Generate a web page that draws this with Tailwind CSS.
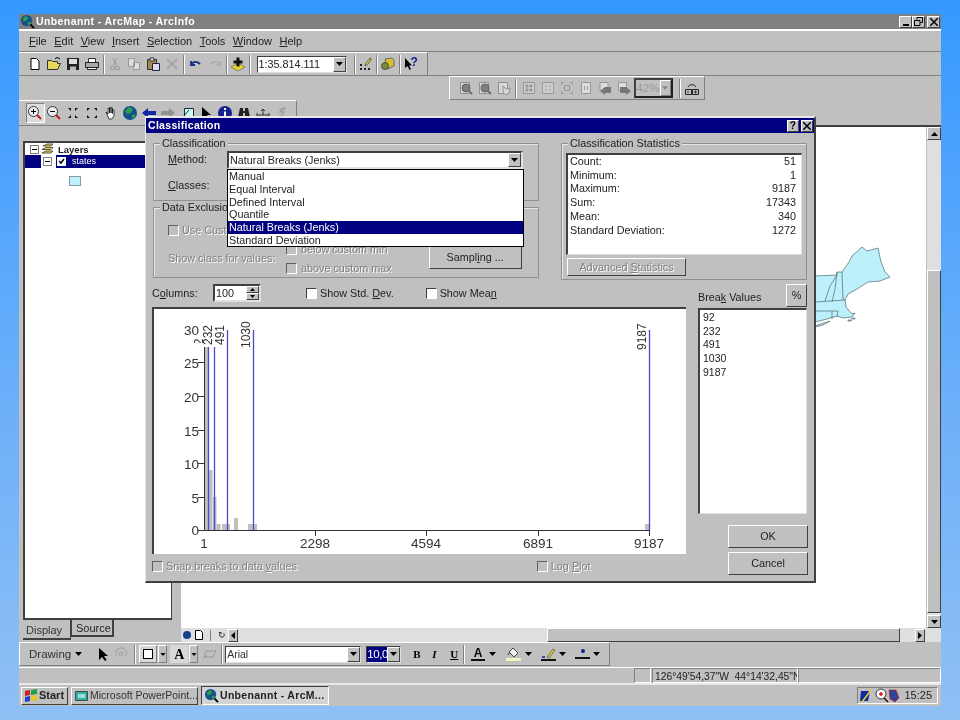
<!DOCTYPE html>
<html lang="de">
<head>
  <meta charset="UTF-8" />
  <title>Unbenannt - ArcMap - ArcInfo</title>
  <script src="https://cdn.jsdelivr.net/npm/@tailwindcss/browser@4"></script>
</head>
<body class="w-[960px] h-[720px] overflow-hidden bg-linear-to-b from-[#3399ff] to-[#90c0f4] font-['Liberation_Sans',Arial,sans-serif] text-[10.8px] leading-[13px] text-[#222]">

<!-- ArcMap window -->
<div class="relative ml-[19px] pt-[14px] w-[922px] blur-[0.35px]">
<div class="relative h-[692px] bg-[#c0c0c0] flex flex-col">

  <!-- title bar -->
  <div class="h-[15px] bg-[#808080] flex items-center text-white font-bold text-[10.5px] tracking-[0.4px]">
    <svg class="w-[15px] h-[15px] ml-[1px]" viewBox="0 0 16 16"><circle cx="7" cy="7" r="6" fill="#14508c"/><path d="M3 5l3-3 3 2-2 3-3 1zM8 9l3-1 1 3-3 1z" fill="#2f9e4f"/><path d="M11 11l4 4" stroke="#000" stroke-width="2"/></svg>
    <span class="ml-[1px]">Unbenannt - ArcMap - ArcInfo</span>
    <div class="ml-auto mr-[1px] flex">
      <span class="w-[13px] h-[12px] flex items-end justify-center bg-[#c0c0c0] border border-t-white border-l-white border-r-[#404040] border-b-[#404040]"><i class="w-[6px] h-[2px] mb-[1px] bg-black"></i></span>
      <span class="w-[13px] h-[12px] flex items-center justify-center bg-[#c0c0c0] border border-t-white border-l-white border-r-[#404040] border-b-[#404040]"><svg class="w-[9px] h-[9px]" viewBox="0 0 9 9" fill="none" stroke="#000"><path d="M3 2.500V.5h5.500v5H6.500M.5 3.500h5.500v5H.5z"/></svg></span>
      <span class="ml-[2px] w-[13px] h-[12px] flex items-center justify-center bg-[#c0c0c0] border border-t-white border-l-white border-r-[#404040] border-b-[#404040]"><svg class="w-[8px] h-[8px]" viewBox="0 0 8 8" stroke="#000" stroke-width="1.500"><path d="M0 0l8 8M8 0L0 8"/></svg></span>
    </div>
  </div>

  <!-- menu bar -->
  <div class="h-[23px] border-t-2 border-t-white border-b border-b-[#808080] flex items-center pl-[10px] gap-[7.500px] text-[11px]">
    <span><u>F</u>ile</span><span><u>E</u>dit</span><span><u>V</u>iew</span><span><u>I</u>nsert</span><span><u>S</u>election</span><span><u>T</u>ools</span><span><u>W</u>indow</span><span><u>H</u>elp</span>
  </div>

  <!-- standard toolbar -->
  <div class="h-[24px] flex">
    <div class="w-[409px] h-[24px] border-t border-t-white border-r border-r-[#808080] border-b border-b-[#808080] flex items-center pl-[6.500px]">
      <span class="w-[19px] flex justify-center"><svg class="w-4 h-4" viewBox="0 0 16 16"><path d="M4 2.500h5.500l2.500 2.500v8.500H4z" fill="#fff" stroke="#000"/></svg></span>
      <span class="w-[19px] flex justify-center"><svg class="w-4 h-4" viewBox="0 0 16 16"><path d="M1.500 13.500v-9h4l1 1h5v2h3l-3 6z" fill="#e8d860" stroke="#333"/><path d="M9 3l2-1.500 3 1.500" fill="none" stroke="#000"/></svg></span>
      <span class="w-[19px] flex justify-center"><svg class="w-4 h-4" viewBox="0 0 16 16"><path d="M2 2h12v12H2z" fill="#222"/><path d="M4 3h8v5H4z" fill="#ddd"/><path d="M5 10.500h6V14H5z" fill="#bbb"/></svg></span>
      <span class="w-[19px] flex justify-center"><svg class="w-4 h-4" viewBox="0 0 16 16"><path d="M4.500 6V2.500h7V6" fill="#fff" stroke="#333"/><path d="M1.500 6.500h13v5h-13z" fill="#aaa" stroke="#222"/><path d="M3.500 11.500h9v2h-9z" fill="#fff" stroke="#222"/></svg></span>
      <i class="w-[2px] h-[19px] mx-[1px] border-l border-l-[#808080] border-r border-r-white"></i>
      <span class="w-[19px] flex justify-center"><svg class="w-4 h-4" viewBox="0 0 16 16" fill="none" stroke="#999"><path d="M6 2l3 7M10 2L7 9"/><circle cx="5.500" cy="12" r="2"/><circle cx="10.500" cy="12" r="2"/></svg></span>
      <span class="w-[19px] flex justify-center"><svg class="w-4 h-4" viewBox="0 0 16 16" fill="#ddd" stroke="#999"><path d="M2.500 2.500h6v8h-6zM7.500 6.500h6v7h-6z"/></svg></span>
      <span class="w-[19px] flex justify-center"><svg class="w-4 h-4" viewBox="0 0 16 16"><path d="M2.500 3.500h9v10h-9z" fill="#a08c50" stroke="#333"/><path d="M5 2h4v3H5z" fill="#ddd" stroke="#333"/><path d="M7.500 7.500h7v7h-7z" fill="#dde" stroke="#224"/></svg></span>
      <span class="w-[19px] flex justify-center"><svg class="w-4 h-4" viewBox="0 0 16 16" stroke="#999" stroke-width="1.200"><path d="M3 3l10 10M13 3L3 13"/></svg></span>
      <i class="w-[2px] h-[19px] mx-[1.500px] border-l border-l-[#808080] border-r border-r-white"></i>
      <span class="w-[19px] flex justify-center"><svg class="w-4 h-4" viewBox="0 0 16 16" fill="none" stroke="#14308c" stroke-width="1.800"><path d="M3 9c2-4 6-4 9-1M3 5v4h4"/></svg></span>
      <span class="w-[19px] flex justify-center"><svg class="w-4 h-4" viewBox="0 0 16 16" fill="none" stroke="#aaa" stroke-width="1.500"><path d="M13 9c-2-4-6-4-9-1M13 5v4H9"/></svg></span>
      <i class="w-[2px] h-[19px] mx-[1px] border-l border-l-[#808080] border-r border-r-white"></i>
      <span class="w-[19px] flex justify-center"><svg class="w-4 h-4" viewBox="0 0 16 16"><path d="M8 7l7 4-7 4-7-4z" fill="#e8d030" stroke="#555" stroke-width=".6"/><path d="M6.500 1.500h3v3h3v3h-3v3h-3v-3h-3v-3h3z" fill="#111"/></svg></span>
      <i class="w-[2px] h-[19px] mx-[1px] border-l border-l-[#808080] border-r border-r-white"></i>
      <div class="ml-[5px] w-[90px] h-[17px] flex bg-white border border-t-[#404040] border-l-[#404040] border-r-[#e0e0e0] border-b-[#e0e0e0] text-[10.8px] leading-[15px]">
        <span class="flex-1 pl-[1px]">1:35.814.111</span>
        <span class="w-[13px] flex items-center justify-center bg-[#c0c0c0] border border-t-white border-l-white border-r-[#404040] border-b-[#404040]"><svg class="w-[7px] h-[4px]" viewBox="0 0 7 4"><path d="M0 0h7L3.500 4z"/></svg></span>
      </div>
      <i class="w-[2px] h-[19px] ml-[7px] mr-[1px] border-l border-l-[#808080] border-r border-r-white"></i>
      <span class="w-[19px] flex justify-center"><svg class="w-4 h-4" viewBox="0 0 16 16"><path d="M7 10l1-3 4-5 1.500 1-4 5.500z" fill="#e8d030" stroke="#333" stroke-width=".7"/><path d="M2 8h2v2H2zM2 12h2v2H2zM6 12h2v2H6zM10 12h2v2h-2z" fill="#222"/></svg></span>
      <i class="w-[2px] h-[19px] mx-[.500px] border-l border-l-[#808080] border-r border-r-white"></i>
      <span class="w-[19px] flex justify-center"><svg class="w-4 h-4" viewBox="0 0 16 16"><path d="M5 3l7-1 2 2v6l-7 3z" fill="#d8c030" stroke="#444" stroke-width=".7"/><circle cx="5" cy="10" r="3.500" fill="#7a8a40" stroke="#333" stroke-width=".7"/></svg></span>
      <i class="w-[2px] h-[19px] mx-[1px] border-l border-l-[#808080] border-r border-r-white"></i>
      <span class="w-[19px] flex justify-center relative"><svg class="w-4 h-4" viewBox="0 0 16 16"><path d="M2 2v10l2.500-2 2 4 1.500-.8-2-3.700h3z" fill="#000"/></svg><b class="absolute left-[9px] top-[0px] text-[12px] text-[#14208c]">?</b></span>
    </div>
    <div class="flex-1 border-b border-b-[#808080] border-t border-t-[#c0c0c0]"></div>
  </div>

  <!-- second row: layout toolbar -->
  <div class="h-[24px] pl-[430px]">
    <div class="w-[256px] h-[24px] border border-t-white border-l-white border-r-[#808080] border-b-[#808080] flex items-center pl-[6px]">
      <span class="w-[19px] flex justify-center"><svg class="w-4 h-4" viewBox="0 0 16 16"><path d="M2.500 2.500h9v11h-9z" fill="#d4d4d4" stroke="#909090"/><circle cx="8" cy="8" r="4" fill="#808080" stroke="#606060"/><path d="M11 11l3 3" stroke="#707070" stroke-width="2"/></svg></span>
      <span class="w-[19px] flex justify-center"><svg class="w-4 h-4" viewBox="0 0 16 16"><path d="M2.500 2.500h9v11h-9z" fill="#d4d4d4" stroke="#909090"/><circle cx="8" cy="8" r="4" fill="#808080" stroke="#606060"/><path d="M11 11l3 3" stroke="#707070" stroke-width="2"/></svg></span>
      <span class="w-[19px] flex justify-center"><svg class="w-4 h-4" viewBox="0 0 16 16" fill="#d8d8d8" stroke="#909090"><path d="M2.500 2.500h9v11h-9z"/><path d="M7 6l3 3 4-1-1 5-3 2-3-3z"/></svg></span>
      <i class="w-[2px] h-[19px] mx-[2px] border-l border-l-[#808080] border-r border-r-white"></i>
      <span class="w-[19px] flex justify-center"><svg class="w-4 h-4" viewBox="0 0 16 16" fill="#ccc" stroke="#999"><path d="M2.500 2.500h11v11h-11z"/><path d="M5 5h2v2H5zM9 9h2v2H9zM9 5h2v2H9zM5 9h2v2H5z" fill="#999"/></svg></span>
      <span class="w-[19px] flex justify-center"><svg class="w-4 h-4" viewBox="0 0 16 16" fill="#ccc" stroke="#999"><path d="M2.500 2.500h11v11h-11z"/><path d="M5 5l2 2M11 11L9 9M11 5L9 7M5 11l2-2"/></svg></span>
      <span class="w-[19px] flex justify-center"><svg class="w-4 h-4" viewBox="0 0 16 16" fill="none" stroke="#999"><path d="M2.500 5V2.500H5M11 2.500h2.500V5M13.500 11v2.500H11M5 13.500H2.500V11M5.500 5.500h5v5h-5z"/></svg></span>
      <span class="w-[19px] flex justify-center"><svg class="w-4 h-4" viewBox="0 0 16 16" fill="#ddd" stroke="#999"><path d="M3.500 2.500h9v11h-9z"/><path d="M6.500 6v4M9.500 6v4"/></svg></span>
      <span class="w-[19px] flex justify-center"><svg class="w-4 h-4" viewBox="0 0 16 16"><path d="M3 2.500h8v8H3z" fill="#ddd" stroke="#999"/><path d="M14 7v6H8V15l-5-4 5-4z" fill="#777"/></svg></span>
      <span class="w-[19px] flex justify-center"><svg class="w-4 h-4" viewBox="0 0 16 16"><path d="M2.500 2.500h8v8h-8z" fill="#ddd" stroke="#999"/><path d="M4 7v6h6v2l5-4-5-4z" fill="#777"/></svg></span>
      <div class="ml-[.500px] w-[39px] h-[20px] flex border-2 border-t-[#404040] border-l-[#404040] border-r-[#222] border-b-[#222] text-[11.500px] leading-[16px] text-[#999]">
        <span class="flex-1 pl-[1px]">42%</span>
        <span class="w-[12px] flex items-center justify-center bg-[#c0c0c0] border border-t-white border-l-white border-r-[#808080] border-b-[#808080]"><svg class="w-[6px] h-[4px]" viewBox="0 0 7 4"><path d="M0 0h7L3.500 4z" fill="#888"/></svg></span>
      </div>
      <i class="w-[2px] h-[19px] ml-[6px] mr-[2px] border-l border-l-[#808080] border-r border-r-white"></i>
      <span class="w-[19px] flex justify-center"><svg class="w-4 h-4" viewBox="0 0 16 16" fill="none" stroke="#222"><path d="M1.500 9.500h6v5h-6zM8.500 9.500h6v5h-6zM4 7c1-3 7-3 8 0"/><path d="M4 11v2M11 11h1v2h-1z"/></svg></span>
    </div>
  </div>

  <!-- tools toolbar -->
  <div class="h-[25px] flex">
    <div class="w-[278px] border-t border-t-white border-r border-r-[#808080] flex items-center pl-[6.500px]">
      <span class="w-[19px] h-[20px] flex justify-center items-center bg-[#dcdcdc] border border-t-[#808080] border-l-[#808080] border-r-white border-b-white"><svg class="w-4 h-4" viewBox="0 0 16 16"><circle cx="6.500" cy="6.500" r="5" fill="#eee" stroke="#333"/><path d="M4 6.500h5M6.500 4v5" stroke="#000"/><path d="M10 10l4 4" stroke="#c01818" stroke-width="2"/></svg></span>
      <span class="w-[19px] flex justify-center"><svg class="w-4 h-4" viewBox="0 0 16 16"><circle cx="6.500" cy="6.500" r="5" fill="#eee" stroke="#333"/><path d="M4 6.500h5" stroke="#000"/><path d="M10 10l4 4" stroke="#c01818" stroke-width="2"/></svg></span>
      <span class="w-[19px] flex justify-center"><svg class="w-4 h-4" viewBox="0 0 16 16" fill="#111"><path d="M3 3l3 3V3zM13 3l-3 3V3zM3 13l3-3v3zM13 13l-3-3v3z"/></svg></span>
      <span class="w-[19px] flex justify-center"><svg class="w-4 h-4" viewBox="0 0 16 16" fill="#111"><path d="M3 3h3L3 6zM13 3h-3l3 3zM3 13h3l-3-3zM13 13h-3l3-3z"/></svg></span>
      <span class="w-[19px] flex justify-center"><svg class="w-4 h-4" viewBox="0 0 16 16"><path d="M3 7l2 2V3.500h1.500V8V2.500H8V8V3h1.500v5.500V5H11v6l-2 3H6z" fill="#fff" stroke="#111" stroke-width=".8"/></svg></span>
      <span class="w-[19px] flex justify-center"><svg class="w-4 h-4" viewBox="0 0 16 16"><circle cx="8" cy="8" r="7" fill="#14508c"/><path d="M3 6l4-4 4 2-2 4-4 1zM10 10l3-1 0 3-3 2z" fill="#2f9e4f"/></svg></span>
      <span class="w-[19px] flex justify-center"><svg class="w-4 h-4" viewBox="0 0 16 16"><path d="M1 8l6-5v3h8v4H7v3z" fill="#1428a0"/></svg></span>
      <span class="w-[19px] flex justify-center"><svg class="w-4 h-4" viewBox="0 0 16 16"><path d="M15 8L9 3v3H1v4h8v3z" fill="#909090"/></svg></span>
      <span class="w-[19px] flex justify-center"><svg class="w-4 h-4" viewBox="0 0 16 16"><path d="M5.500 3.500h9v8h-9z" fill="#cfe" stroke="#224"/><path d="M1 12h3l6-7" stroke="#124" fill="none"/></svg></span>
      <span class="w-[19px] flex justify-center"><svg class="w-4 h-4" viewBox="0 0 16 16"><path d="M4 2v12l3-3 3 4 1.500-1-2.500-4h4z" fill="#000"/></svg></span>
      <span class="w-[19px] flex justify-center"><svg class="w-4 h-4" viewBox="0 0 16 16"><circle cx="8" cy="8" r="7" fill="#14208c"/><path d="M7 6.500h2V13H7zM7 3h2v2H7z" fill="#fff"/></svg></span>
      <span class="w-[19px] flex justify-center"><svg class="w-4 h-4" viewBox="0 0 16 16" fill="#222"><path d="M4 3h3v3h2V3h3l2 9h-5V8H7v4H2z"/></svg></span>
      <span class="w-[19px] flex justify-center"><svg class="w-4 h-4" viewBox="0 0 16 16" fill="none" stroke="#333"><path d="M2 10h12M8 10V4M6 6l2-2 2 2"/><path d="M2 8v4M14 8v4"/></svg></span>
      <span class="w-[19px] flex justify-center"><svg class="w-4 h-4" viewBox="0 0 16 16" fill="none" stroke="#999" stroke-width="1.200"><path d="M11 2L6 7h4l-5 7M5 4h6M4 11h6"/></svg></span>
    </div>
  </div>

  <!-- TOC + map -->
  <div class="h-[517px] flex">
    <div class="w-[159px] flex flex-col pl-[4px] pt-[15px] border-t border-t-[#808080]">
      <div class="w-[149px] h-[479px] bg-white border-t-2 border-l-2 border-r border-b-2 border-[#404040]">
        <div class="h-[12px] flex items-center pl-[5px]">
          <span class="w-[9px] h-[9px] border border-[#808080] flex items-center justify-center"><i class="w-[5px] h-[1px] bg-black"></i></span>
          <svg class="w-[14px] h-[13px] ml-[2px]" viewBox="0 0 14 13"><path d="M2 3l4-2h6l-2 2H3zM1 6.500l4-2h7l-2 2H2zM1 10l4-2h7l-2 2H2z" fill="#e8d830" stroke="#333" stroke-width=".8"/></svg>
          <b class="ml-[3px] text-[9.500px]">Layers</b>
        </div>
        <div class="h-[13px] flex items-center">
          <i class="w-[16px] h-[13px] bg-[#000080]"></i>
          <span class="ml-[2px] w-[9px] h-[9px] border border-[#808080] flex items-center justify-center"><i class="w-[5px] h-[1px] bg-black"></i></span>
          <div class="ml-[4px] flex-1 h-[13px] bg-[#000080] flex items-center text-white text-[9px]">
            <span class="w-[9px] h-[9px] ml-[1px] bg-white flex items-center justify-center"><svg class="w-[7px] h-[7px]" viewBox="0 0 7 7" fill="none" stroke="#000" stroke-width="1.500"><path d="M1 3l2 2 3-4"/></svg></span>
            <span class="ml-[6px]">states</span>
          </div>
        </div>
        <div class="ml-[44px] mt-[8px] w-[12px] h-[10px] bg-[#bdf0fb] border border-[#8a9a9a]"></div>
      </div>
      <div class="flex h-[20px] text-[11px]">
        <span class="w-[48px] h-[20px] pl-[3px] pt-[4px] border-b-2 border-b-[#404040] border-r border-r-[#404040] text-[#333]">Display</span>
        <span class="w-[43px] h-[17px] pl-[4px] pt-[2px] border-l border-l-[#404040] border-r-2 border-r-[#404040] border-b-2 border-b-[#404040]">Source</span>
      </div>
    </div>
    <div class="flex-1 flex flex-col">
      <div class="h-[503px] flex border-t-2 border-t-[#404040] ml-[3px]">
        <div class="relative flex-1 bg-white">
          <!-- northeast states showing past the dialog -->
          <svg class="absolute left-[634px] top-[119px] w-[80px] h-[100px]" viewBox="815 247 80 100" fill="#bdf0fb" stroke="#4a6a70" stroke-width=".7">
            <path d="M815 277l22-1 0-3 5 0 7-10 3-6 10-9 5 4 11-3 3 14 4 10 5 5-10 4-12 1-11 7-9 5-3 6 1 7 6 7 3-1-3 4-9 1-6-2-10 3-12 3z"/>
            <path d="M842 273l1 27 2 1M837 273l-2 17-3 13M837 276l-7 11-5 15M815 303l30-2M815 312h23M832 312v8M838 312l-1 6" fill="none"/>
            <path d="M815 327l15-5-7 4-8 2z"/>
            <path d="M848 321h4l-1 1h-3zM852 319h3v1h-3z"/>
          </svg>
        </div>
        <div class="w-[15px] flex flex-col bg-[#dfdfdf] border-l border-l-[#c0c0c0]">
          <span class="h-[13px] flex items-center justify-center bg-[#c0c0c0] border border-t-white border-l-white border-r-[#404040] border-b-[#404040]"><svg class="w-[7px] h-[4px]" viewBox="0 0 7 4"><path d="M0 4h7L3.500 0z"/></svg></span>
          <div class="h-[130px]"></div>
          <div class="flex-1 bg-[#c0c0c0] border border-t-white border-l-white border-r-[#404040] border-b-[#404040]"></div>
          <span class="h-[13px] mt-[2px] flex items-center justify-center bg-[#c0c0c0] border border-t-white border-l-white border-r-[#404040] border-b-[#404040]"><svg class="w-[7px] h-[4px]" viewBox="0 0 7 4"><path d="M0 0h7L3.500 4z"/></svg></span>
        </div>
      </div>
      <div class="h-[14px] flex items-center bg-[#dfdfdf] ml-[3px]">
        <span class="w-[12px] flex justify-center"><i class="w-[8px] h-[8px] rounded-full bg-[#14408c]"></i></span>
        <span class="w-[12px] flex justify-center"><svg class="w-[8px] h-[10px]" viewBox="0 0 8 10"><path d="M.5.500h5l2 2v7h-7z" fill="#fff" stroke="#000"/></svg></span>
        <i class="w-[1px] h-[11px] mx-[5px] bg-[#808080]"></i>
        <span class="w-[12px] text-center text-[9px] leading-[10px]">↻</span>
        <span class="w-[10px] h-[13px] flex items-center justify-center bg-[#c0c0c0] border border-t-white border-l-white border-r-[#404040] border-b-[#404040]"><svg class="w-[4px] h-[7px]" viewBox="0 0 4 7"><path d="M4 0v7L0 3.500z"/></svg></span>
        <div class="ml-[309px] w-[353px] h-[14px] bg-[#c0c0c0] border border-t-white border-l-white border-r-[#404040] border-b-[#404040]"></div>
        <div class="w-[15px]"></div>
        <span class="w-[10px] h-[13px] flex items-center justify-center bg-[#c0c0c0] border border-t-white border-l-white border-r-[#404040] border-b-[#404040]"><svg class="w-[4px] h-[7px]" viewBox="0 0 4 7"><path d="M0 0v7l4-3.500z"/></svg></span>
      </div>
    </div>
  </div>

  <!-- drawing toolbar -->
  <div class="h-[24px] flex items-center">
    <div class="w-[591px] h-[24px] border border-t-white border-l-white border-r-[#808080] border-b-[#808080] flex items-center pl-[9px] text-[11.500px] text-[#333]">
      <span>Drawing</span>
      <svg class="ml-[4px] w-[7px] h-[4px]" viewBox="0 0 7 4"><path d="M0 0h7L3.500 4z"/></svg>
      <svg class="ml-[13px] w-4 h-4" viewBox="0 0 16 16"><path d="M4 2v12l3-3 3 4 1.500-1-2.500-4h4z" fill="#000"/></svg>
      <svg class="ml-[3px] w-[14px] h-[14px]" viewBox="0 0 16 16" fill="none" stroke="#aaa" stroke-width="1.500"><path d="M3 10a6 6 0 1 1 10 1"/><circle cx="8" cy="8" r="2"/></svg>
      <i class="w-[2px] h-[19px] ml-[6px] border-l border-l-[#808080] border-r border-r-white"></i>
      <span class="ml-[3px] w-[18px] h-[18px] flex items-center justify-center bg-[#d8d8d8] border border-t-white border-l-white border-r-[#808080] border-b-[#808080]"><i class="w-[10px] h-[10px] bg-white border border-black"></i></span>
      <span class="ml-[1px] w-[9px] h-[18px] flex items-center justify-center border border-t-white border-l-white border-r-[#808080] border-b-[#808080]"><svg class="w-[6px] h-[3px]" viewBox="0 0 7 4"><path d="M0 0h7L3.500 4z"/></svg></span>
      <span class="ml-[3px] w-[18px] h-[18px] flex items-center justify-center bg-[#d8d8d8] font-['Liberation_Serif',serif] font-bold text-[14px] text-black">A</span>
      <span class="ml-[1px] w-[9px] h-[18px] flex items-center justify-center border border-t-white border-l-white border-r-[#808080] border-b-[#808080]"><svg class="w-[6px] h-[3px]" viewBox="0 0 7 4"><path d="M0 0h7L3.500 4z"/></svg></span>
      <svg class="ml-[4px] w-4 h-4" viewBox="0 0 16 16" fill="none" stroke="#999"><path d="M4 5h10l-3 6H2zM1 13l4-4"/></svg>
      <i class="w-[2px] h-[19px] ml-[3px] border-l border-l-[#808080] border-r border-r-white"></i>
      <div class="ml-[2px] w-[136px] h-[17px] flex bg-white border border-t-[#404040] border-l-[#404040] border-r-[#e0e0e0] border-b-[#e0e0e0] leading-[15px] text-[10.500px]">
        <span class="flex-1 pl-[1px]">Arial</span>
        <span class="w-[13px] flex items-center justify-center bg-[#c0c0c0] border border-t-white border-l-white border-r-[#404040] border-b-[#404040]"><svg class="w-[7px] h-[4px]" viewBox="0 0 7 4"><path d="M0 0h7L3.500 4z"/></svg></span>
      </div>
      <div class="ml-[5px] w-[35px] h-[17px] flex bg-white border border-t-[#404040] border-l-[#404040] border-r-[#e0e0e0] border-b-[#e0e0e0] leading-[15px] text-[11.500px]">
        <span class="w-[20px] bg-[#000080] text-white tracking-[-0.4px]">10,0</span>
        <span class="ml-auto w-[13px] flex items-center justify-center bg-[#c0c0c0] border border-t-white border-l-white border-r-[#404040] border-b-[#404040]"><svg class="w-[7px] h-[4px]" viewBox="0 0 7 4"><path d="M0 0h7L3.500 4z"/></svg></span>
      </div>
      <b class="ml-[12px] w-[10px] font-['Liberation_Serif',serif] text-[11px] text-black">B</b>
      <b class="ml-[9px] w-[10px] font-['Liberation_Serif',serif] italic text-[11px] text-black">I</b>
      <b class="ml-[8px] w-[10px] font-['Liberation_Serif',serif] underline text-[11px] text-black">U</b>
      <i class="w-[2px] h-[19px] ml-[3px] border-l border-l-[#808080] border-r border-r-white"></i>
      <span class="ml-[6px] w-[14px] flex flex-col items-center font-['Liberation_Sans',sans-serif] font-bold not-italic text-[12px] leading-[12px] text-black">A<i class="w-[14px] h-[2px] bg-[#111]"></i></span>
      <svg class="ml-[4px] w-[7px] h-[4px]" viewBox="0 0 7 4"><path d="M0 0h7L3.500 4z"/></svg>
      <span class="ml-[10px] w-[15px] flex flex-col items-center"><svg class="w-[13px] h-[11px]" viewBox="0 0 13 11"><path d="M6 1l5 5-4 4-5-5z" fill="#eee" stroke="#445"/><path d="M3 5l-2 3" stroke="#336"/></svg><i class="w-[15px] h-[3px] bg-[#f4f4c0]"></i></span>
      <svg class="ml-[4px] w-[7px] h-[4px]" viewBox="0 0 7 4"><path d="M0 0h7L3.500 4z"/></svg>
      <span class="ml-[9px] w-[15px] flex flex-col items-center"><svg class="w-[13px] h-[11px]" viewBox="0 0 13 11"><path d="M5 9l6-8 2 1-6 8z" fill="#e8d030" stroke="#333" stroke-width=".6"/><path d="M0 9h3" stroke="#14208c" stroke-width="1.500"/></svg><i class="w-[15px] h-[2px] bg-[#111]"></i></span>
      <svg class="ml-[3px] w-[7px] h-[4px]" viewBox="0 0 7 4"><path d="M0 0h7L3.500 4z"/></svg>
      <span class="ml-[9px] w-[15px] flex flex-col items-center"><i class="w-[4px] h-[4px] mb-[4px] rounded-full bg-[#14208c]"></i><i class="w-[15px] h-[2px] bg-[#111]"></i></span>
      <svg class="ml-[3px] w-[7px] h-[4px]" viewBox="0 0 7 4"><path d="M0 0h7L3.500 4z"/></svg>
    </div>
  </div>

  <!-- status bar -->
  <div class="h-[17px] mt-[1px] flex border-t border-t-white border-b border-b-[#e8e8e8]">
    <div class="w-[615px]"></div>
    <div class="w-[17px] border border-t-[#808080] border-l-[#808080] border-r-white border-b-white"></div>
    <div class="ml-[1px] w-[146px] pl-[2px] border border-t-[#808080] border-l-[#808080] border-r-white border-b-white text-[10.300px] leading-[15px] whitespace-nowrap overflow-hidden">126°49'54,37"W&nbsp; 44°14'32,45"N</div>
    <div class="flex-1 border border-t-[#808080] border-l-[#808080] border-r-white border-b-white"></div>
  </div>

  <!-- taskbar -->
  <div class="flex-1 flex items-center pl-[2px] pr-[3px] text-[10.500px] border-t border-t-[#e8e8e8]">
    <span class="w-[47px] h-[18px] flex items-center font-bold text-[11px] pl-[2px] gap-[1px] border border-t-white border-l-white border-r-[#404040] border-b-[#404040]">
      <svg class="w-[14px] h-[13px] shrink-0" viewBox="0 0 14 13"><path d="M1 2l5-1v5l-5 1z" fill="#d02020"/><path d="M7 1l6-1v5l-6 1z" fill="#20a040"/><path d="M1 8l5-1v5l-5 1z" fill="#2040d0"/><path d="M7 7l6-1v5l-6 1z" fill="#e8c820"/></svg>
      <span>Start</span>
    </span>
    <span class="ml-[3px] w-[127px] h-[18px] flex items-center pl-[3px] gap-[2px] border border-t-white border-l-white border-r-[#404040] border-b-[#404040] text-[#333] whitespace-nowrap">
      <svg class="w-[13px] h-[12px] shrink-0" viewBox="0 0 13 12"><path d="M.5 1.500h12v9H.5z" fill="#30b0a0" stroke="#445"/><path d="M3 4h7v4H3z" fill="#a0e0d0"/></svg>
      <span>Microsoft PowerPoint...</span>
    </span>
    <span class="ml-[3px] w-[128px] h-[19px] flex items-center pl-[2px] gap-[1px] bg-[#d4d4d4] border border-t-[#404040] border-l-[#404040] border-r-white border-b-white font-bold text-[10.500px] tracking-[0.3px] whitespace-nowrap">
      <svg class="w-[15px] h-[15px] shrink-0" viewBox="0 0 16 16"><circle cx="7" cy="7" r="6" fill="#14508c"/><path d="M3 5l3-3 3 2-2 3-3 1zM8 9l3-1 1 3-3 1z" fill="#2f9e4f"/><path d="M11 11l4 4" stroke="#000" stroke-width="2"/></svg>
      <span>Unbenannt - ArcM...</span>
    </span>
    <div class="ml-auto w-[81px] h-[17px] flex items-center pl-[1px] border border-t-[#808080] border-l-[#808080] border-r-white border-b-white text-[11px]">
      <svg class="w-[42px] h-[15px] shrink-0" viewBox="0 0 42 15"><path d="M2 3h9l-2 10H1z" fill="#1428a0"/><path d="M3 14l9-12" stroke="#e8d030" stroke-width="1.500"/><circle cx="22" cy="6" r="5" fill="#fff" stroke="#333"/><path d="M20 6h4M22 4v4" stroke="#d01818" stroke-width="1.500"/><path d="M25 10l4 4" stroke="#111" stroke-width="1.500"/><path d="M30 2h7l3 8-4 4-5-3z" fill="#30409c" stroke="#c03020" stroke-width=".8"/></svg>
      <span class="ml-auto mr-[5px]">15:25</span>
    </div>
  </div>

  <!-- Classification dialog -->
  <div class="absolute left-[126px] top-[102px] w-[671px] h-[467px] bg-[#c0c0c0] border-t-2 border-t-[#e8e8e8] border-l border-l-[#e8e8e8] border-r-2 border-r-[#404040] border-b-2 border-b-[#404040] flex flex-col">
    <div class="h-[15px] bg-[#000080] flex items-center pl-[2px] text-white font-bold text-[10.500px] tracking-[0.3px]">
      <span>Classification</span>
      <span class="ml-auto w-[12px] h-[12px] flex items-center justify-center bg-[#c0c0c0] text-black text-[10px] border border-t-white border-l-white border-r-[#404040] border-b-[#404040]">?</span>
      <span class="ml-[2px] mr-[1px] w-[12px] h-[12px] flex items-center justify-center bg-[#c0c0c0] border border-t-white border-l-white border-r-[#404040] border-b-[#404040]"><svg class="w-[8px] h-[8px]" viewBox="0 0 8 8" stroke="#000" stroke-width="1.500"><path d="M0 0l8 8M8 0L0 8"/></svg></span>
    </div>

    <div class="flex pl-[7px] pt-[10px] h-[147px]">
      <div class="w-[386px] flex flex-col gap-[6px]">
        <!-- Classification group -->
        <div class="relative h-[58px] border border-[#909090] shadow-[inset_1px_1px_0_#e8e8e8]">
          <span class="absolute left-[6px] -top-[7px] px-[2px] bg-[#c0c0c0]">Classification</span>
          <div class="flex items-center mt-[7px] h-[17px] pl-[14px]">
            <span class="w-[59px]"><u>M</u>ethod:</span>
            <div class="w-[296px] h-[18px] flex bg-white border-2 border-t-[#404040] border-l-[#404040] border-r-[#e0e0e0] border-b-[#e0e0e0] leading-[14px]">
              <span class="flex-1 pl-[1px]">Natural Breaks (Jenks)</span>
              <span class="w-[13px] flex items-center justify-center bg-[#c0c0c0] border border-t-white border-l-white border-r-[#404040] border-b-[#404040]"><svg class="w-[7px] h-[4px]" viewBox="0 0 7 4"><path d="M0 0h7L3.500 4z"/></svg></span>
            </div>
          </div>
          <div class="mt-[11px] pl-[14px]"><u>C</u>lasses:</div>
          <!-- open dropdown over the groups -->
          <div class="absolute left-[73px] top-[25px] z-10 w-[297px] h-[78px] bg-white border border-black leading-[13px]">
            <div class="pl-[1px] h-[12.800px]">Manual</div>
            <div class="pl-[1px] h-[12.800px]">Equal Interval</div>
            <div class="pl-[1px] h-[12.800px]">Defined Interval</div>
            <div class="pl-[1px] h-[12.800px]">Quantile</div>
            <div class="pl-[1px] h-[12.800px] bg-[#000080] text-white">Natural Breaks (Jenks)</div>
            <div class="pl-[1px] h-[12.800px]">Standard Deviation</div>
          </div>
        </div>
        <!-- Data Exclusion group -->
        <div class="relative h-[71px] border border-[#909090] shadow-[inset_1px_1px_0_#e8e8e8]">
          <span class="absolute left-[6px] -top-[7px] px-[2px] bg-[#c0c0c0]">Data Exclusio</span>
          <div class="mt-[16px] pl-[14px] flex items-center gap-[3px] text-[#808080] [text-shadow:1px_1px_0_#fff]">
            <i class="w-[11px] h-[11px] border border-t-[#606060] border-l-[#606060] border-r-white border-b-white"></i>
            <span>Use Cust</span>
          </div>
          <div class="mt-[3px] flex items-start pl-[14px] text-[#808080] [text-shadow:1px_1px_0_#fff]">
            <span class="w-[118px] mt-[12px]">Show class for values:</span>
            <div class="flex flex-col gap-[6px] pt-[3px]">
              <div class="flex items-center gap-[4px]"><i class="w-[11px] h-[11px] border border-t-[#606060] border-l-[#606060] border-r-white border-b-white"></i><span>below custom min</span></div>
              <div class="flex items-center gap-[4px]"><i class="w-[11px] h-[11px] border border-t-[#606060] border-l-[#606060] border-r-white border-b-white"></i><span>above custom max</span></div>
            </div>
            <span class="ml-[37px] mt-[6px] w-[93px] h-[23px] flex items-center justify-center text-[#222] [text-shadow:none] border border-t-white border-l-white border-r-[#404040] border-b-[#404040]">Sampl<u>i</u>ng ...</span>
          </div>
        </div>
      </div>
      <!-- Statistics group -->
      <div class="relative ml-[22px] w-[246px] h-[137px] border border-[#909090] shadow-[inset_1px_1px_0_#e8e8e8]">
        <span class="absolute left-[6px] -top-[7px] px-[2px] bg-[#c0c0c0]">Classification Statistics</span>
        <div class="ml-[4px] mt-[9px] w-[236px] h-[102px] bg-white border-t-2 border-l-2 border-[#404040] border-r border-b border-r-[#e0e0e0] border-b-[#e0e0e0] pl-[2px] pr-[3px] leading-[13.700px]">
          <div class="flex justify-between pr-[2px]"><span>Count:</span><span>51</span></div>
          <div class="flex justify-between pr-[2px]"><span>Minimum:</span><span>1</span></div>
          <div class="flex justify-between pr-[2px]"><span>Maximum:</span><span>9187</span></div>
          <div class="flex justify-between pr-[2px]"><span>Sum:</span><span>17343</span></div>
          <div class="flex justify-between pr-[2px]"><span>Mean:</span><span>340</span></div>
          <div class="flex justify-between pr-[2px]"><span>Standard Deviation:</span><span>1272</span></div>
        </div>
        <div class="ml-[5px] mt-[3px] w-[119px] h-[18px] flex items-center justify-center border border-t-white border-l-white border-r-[#404040] border-b-[#404040] text-[#808080] [text-shadow:1px_1px_0_#fff]">Advanced&nbsp;<u>S</u>tatistics</div>
      </div>
    </div>

    <div class="flex pl-[6px] pt-[2px]">
      <div class="w-[534px]">
        <div class="h-[22px] flex items-center">
          <span class="w-[61px]">C<u>o</u>lumns:</span>
          <div class="w-[48px] h-[18px] flex bg-white border-2 border-t-[#404040] border-l-[#404040] border-r-[#e0e0e0] border-b-[#e0e0e0] leading-[14px]">
            <span class="flex-1 pl-[1px]">100</span>
            <span class="w-[13px] flex flex-col bg-[#c0c0c0]">
              <i class="h-[7px] flex items-center justify-center border border-t-white border-l-white border-r-[#404040] border-b-[#404040]"><svg class="w-[5px] h-[3px]" viewBox="0 0 7 4"><path d="M0 4h7L3.500 0z"/></svg></i>
              <i class="h-[7px] flex items-center justify-center border border-t-white border-l-white border-r-[#404040] border-b-[#404040]"><svg class="w-[5px] h-[3px]" viewBox="0 0 7 4"><path d="M0 0h7L3.500 4z"/></svg></i>
            </span>
          </div>
          <i class="ml-[45px] w-[11px] h-[11px] bg-white border border-t-[#404040] border-l-[#404040] border-r-white border-b-white"></i>
          <span class="ml-[3px]">Show Std. <u>D</u>ev.</span>
          <i class="ml-[32px] w-[11px] h-[11px] bg-white border border-t-[#404040] border-l-[#404040] border-r-white border-b-white"></i>
          <span class="ml-[3px]">Show Mea<u>n</u></span>
        </div>
        <!-- histogram -->
        <svg class="block mt-[3px] w-[534px] h-[247px] bg-white border-t-2 border-l-2 border-t-[#404040] border-l-[#404040]" viewBox="154 309 532 245">
          <g font-family="Liberation Sans, Arial, sans-serif" fill="#333">
            <text transform="translate(203 352) rotate(-90)" font-size="12">92</text>
            <rect x="194" y="343" width="10" height="12" fill="#fff"/>
          </g>
          <g fill="#c0c0c0">
            <rect x="204" y="347" width="4" height="183"/><rect x="209" y="470" width="3.500" height="60"/><rect x="213" y="497" width="3.500" height="33"/>
            <rect x="216.500" y="524" width="4" height="6"/><rect x="222" y="524" width="4" height="6"/><rect x="226" y="524" width="4" height="6"/>
            <rect x="234" y="518" width="4" height="12"/><rect x="248" y="524" width="4" height="6"/><rect x="252" y="524" width="5" height="6"/><rect x="645" y="524" width="4" height="6"/>
          </g>
          <g stroke="#4a4ad0" stroke-width="1.300">
            <path d="M208.500 347V530M214.500 347V530M227.500 330V530M253.500 330V530M649.500 330V530"/>
          </g>
          <g fill="none" stroke="#333">
            <path d="M204.500 347V530.500H650"/>
            <path d="M204 362.500h-6M204 396.500h-6M204 430.500h-6M204 463.500h-6M204 497.500h-6M204 530.500h-6"/>
            <path d="M315.500 531v5M426.500 531v5M538.500 531v5M649.500 531v5"/>
          </g>
          <g font-family="Liberation Sans, Arial, sans-serif" font-size="13.500" fill="#333">
            <g text-anchor="end">
              <text x="199" y="335">30</text><text x="199" y="368">25</text><text x="199" y="402">20</text><text x="199" y="436">15</text><text x="199" y="469">10</text><text x="199" y="503">5</text><text x="199" y="535">0</text>
            </g>
            <g text-anchor="middle">
              <text x="204" y="548">1</text><text x="315" y="548">2298</text><text x="426" y="548">4594</text><text x="538" y="548">6891</text><text x="649" y="548">9187</text>
            </g>
            <g font-size="12">
              <text transform="translate(212 345) rotate(-90)">232</text>
              <text transform="translate(224 345) rotate(-90)">491</text>
              <text transform="translate(250 348) rotate(-90)">1030</text>
              <text transform="translate(646 350) rotate(-90)">9187</text>
            </g>
          </g>
        </svg>
        <div class="mt-[6px] flex items-center text-[#808080] [text-shadow:1px_1px_0_#fff]">
          <i class="w-[11px] h-[11px] border border-t-[#606060] border-l-[#606060] border-r-white border-b-white"></i>
          <span class="ml-[3px]">Snap breaks to data <u>v</u>alues</span>
          <i class="ml-[240px] w-[11px] h-[11px] border border-t-[#606060] border-l-[#606060] border-r-white border-b-white"></i>
          <span class="ml-[3px]">Log <u>P</u>lot</span>
        </div>
      </div>
      <div class="ml-[12px] w-[109px] flex flex-col">
        <div class="h-[25px] flex items-end justify-between">
          <span class="mb-[3px]">Brea<u>k</u> Values</span>
          <span class="w-[21px] h-[23px] flex items-center justify-center border border-t-white border-l-white border-r-[#404040] border-b-[#404040]">%</span>
        </div>
        <div class="mt-[1px] h-[206px] bg-white border-t-2 border-l-2 border-t-[#404040] border-l-[#404040] border-r border-b border-r-[#e0e0e0] border-b-[#e0e0e0] pt-[1px] pl-[3px] leading-[13.700px] text-[10.500px]">
          <div>92</div><div>232</div><div>491</div><div>1030</div><div>9187</div>
        </div>
        <button class="mt-[11px] ml-[30px] w-[80px] h-[23px] flex items-center justify-center border border-t-white border-l-white border-r-[#404040] border-b-[#404040]">OK</button>
        <button class="mt-[4px] ml-[30px] w-[80px] h-[23px] flex items-center justify-center border border-t-white border-l-white border-r-[#404040] border-b-[#404040]">Cancel</button>
      </div>
    </div>
  </div>

</div>
</div>
</body>
</html>
